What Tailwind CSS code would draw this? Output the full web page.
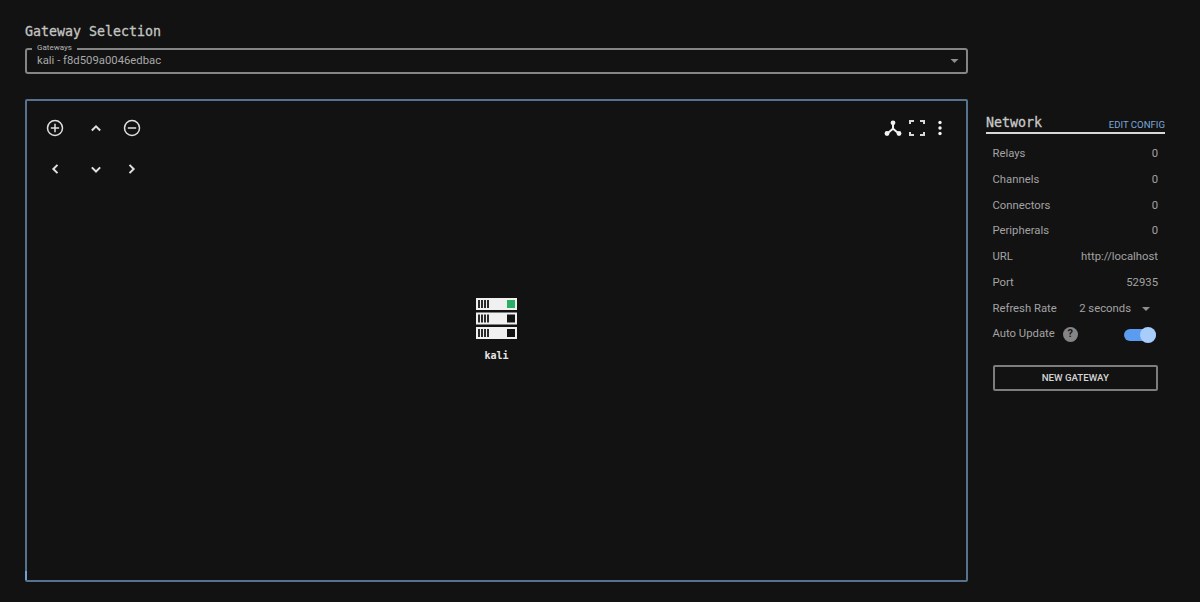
<!DOCTYPE html>
<html lang="en">
<head>
  <meta charset="UTF-8">
  <title>Gateway Selection</title>
  <script src="https://cdn.jsdelivr.net/npm/@tailwindcss/browser@4"></script>
</head>
<body class="bg-[#121212] h-[602px] w-[1200px] overflow-hidden font-['Roboto',sans-serif]">
  <div class="pl-[25px] pt-[23px] flex flex-col w-[968px]">
    <h1 class="font-['DejaVu_Sans_Mono',monospace] text-[13.3px] leading-[18px] text-[#c4c4c4] [-webkit-text-stroke:0.3px_#c4c4c4]">Gateway Selection</h1>

    <!-- gateway select -->
    <div class="relative mt-[7px] h-[26px] border-2 border-[#858585] rounded-[3px] flex items-center justify-between pl-[10px] pr-[7px]">
      <span class="absolute -top-[7px] left-[5px] bg-[#121212] px-[5px] text-[8px] leading-[10px] text-[#b5b5b5]">Gateways</span>
      <span class="text-[11.3px] text-[#a8a8a8]">kali - f8d509a0046edbac</span>
      <svg width="9" height="4" viewBox="0 0 10 5"><path d="M0 0h10L5 5z" fill="#8f8f8f"/></svg>
    </div>

    <!-- graph panel -->
    <div class="relative mt-[25px] h-[483px] border-2 border-[#56728f] rounded-[2px] flex items-center justify-center pb-[21px]">
      <span class="absolute -left-[2px] bottom-0 w-[2px] h-[9px] bg-[#6f9fd4]"></span>
      <div class="absolute top-[17px] left-[18px] flex flex-col gap-[21px]">
        <div class="flex items-center">
          <svg class="w-[20px] h-[20px] mr-[21px]" viewBox="0 0 24 24" fill="none" stroke="#e0e0e0" stroke-width="1.800"><circle cx="12" cy="12" r="9"/><path d="M12 7v10M7 12h10"/></svg>
          <svg class="w-[20px] h-[20px] mr-[16px]" viewBox="0 0 24 24" fill="none" stroke="#e0e0e0" stroke-width="2.400"><path d="M7 15l5-5 5 5"/></svg>
          <svg class="w-[20px] h-[20px]" viewBox="0 0 24 24" fill="none" stroke="#e0e0e0" stroke-width="1.800"><circle cx="12" cy="12" r="9"/><path d="M7 12h10"/></svg>
        </div>
        <div class="flex items-center">
          <svg class="w-[20px] h-[20px] mr-[21px]" viewBox="0 0 24 24" fill="none" stroke="#e0e0e0" stroke-width="2.400"><path d="M15 7l-5 5 5 5"/></svg>
          <svg class="w-[20px] h-[20px] mr-[16px]" viewBox="0 0 24 24" fill="none" stroke="#e0e0e0" stroke-width="2.400"><path d="M7 10l5 5 5-5"/></svg>
          <svg class="w-[20px] h-[20px]" viewBox="0 0 24 24" fill="none" stroke="#e0e0e0" stroke-width="2.400"><path d="M9 7l5 5-5 5"/></svg>
        </div>
      </div>

      <div class="absolute top-[17px] right-[16px] flex items-center gap-[4px]">
        <svg class="w-[20px] h-[20px]" viewBox="0 0 20 20" fill="#f2f2f2"><circle cx="10" cy="4.800" r="2.400"/><circle cx="4" cy="15.500" r="2.400"/><circle cx="16" cy="15.500" r="2.400"/><path d="M9 5h2v5.200l5 4.300-1.200 1.500-4.800-4-4.800 4L4 14.500l5-4.300z"/></svg>
        <svg class="w-[20px] h-[20px]" viewBox="0 0 20 20" fill="none" stroke="#d8d8d8" stroke-width="2"><path d="M3 6V3h4M13 3h4v3M17 14v3h-4M7 17H3v-3"/></svg>
        <svg class="w-[20px] h-[20px] -ml-[1px]" viewBox="0 0 20 20" fill="#f2f2f2"><circle cx="10" cy="4.500" r="1.700"/><circle cx="10" cy="10" r="1.700"/><circle cx="10" cy="15.500" r="1.700"/></svg>
      </div>

      <!-- gateway node -->
      <div class="flex flex-col items-center">
        <svg width="41" height="41" viewBox="0 0 41 41">
          <rect width="41" height="12" fill="#f0f0f0"/>
          <rect y="14.500" width="41" height="12" fill="#f0f0f0"/>
          <rect y="29" width="41" height="12" fill="#f0f0f0"/>
          <path d="M2 2h2v8H2zM5 2h2v8H5zM8 2h2v8H8zM11 2h2v8h-2zM2 16.500h2v8H2zM5 16.500h2v8H5zM8 16.500h2v8H8zM11 16.500h2v8h-2zM2 31h2v8H2zM5 31h2v8H5zM8 31h2v8H8zM11 31h2v8h-2z" fill="#2a2a2a"/>
          <rect x="31" y="2" width="8" height="8" fill="#2bae66"/>
          <rect x="31" y="16.500" width="8" height="8" fill="#121212"/>
          <rect x="31" y="31" width="8" height="8" fill="#121212"/>
        </svg>
        <span class="mt-[10px] font-['DejaVu_Sans_Mono',monospace] text-[10px] leading-[13px] font-bold text-[#e6e6e6]">kali</span>
      </div>
    </div>
  </div>

  <!-- network sidebar -->
  <div class="absolute top-[113px] left-[986px] w-[179px] flex flex-col">
    <div class="flex items-end justify-between border-b-2 border-[#d8d8d8] h-[21px]">
      <h2 class="font-['DejaVu_Sans_Mono',monospace] text-[13.3px] leading-[18px] text-[#c8c8c8] [-webkit-text-stroke:0.3px_#c8c8c8]">Network</h2>
      <span class="text-[9.600px] leading-[14px] text-[#7da7d9]">EDIT CONFIG</span>
    </div>
    <div class="pl-[6.500px] pr-[7px] pt-[8px] flex flex-col text-[11.300px] text-[#a3a3a3]">
      <div class="h-[25.700px] flex items-center justify-between"><span>Relays</span><span>0</span></div>
      <div class="h-[25.700px] flex items-center justify-between"><span>Channels</span><span>0</span></div>
      <div class="h-[25.700px] flex items-center justify-between"><span>Connectors</span><span>0</span></div>
      <div class="h-[25.700px] flex items-center justify-between"><span>Peripherals</span><span>0</span></div>
      <div class="h-[25.700px] flex items-center justify-between"><span>URL</span><span>http://localhost</span></div>
      <div class="h-[25.700px] flex items-center justify-between"><span>Port</span><span>52935</span></div>
      <div class="h-[25.700px] flex items-center justify-between">
        <span>Refresh Rate</span>
        <span class="flex items-center mr-[8px]">2 seconds<svg class="ml-[11px]" width="8" height="4" viewBox="0 0 8 4"><path d="M0 0h8L4 4z" fill="#8f8f8f"/></svg></span>
      </div>
      <div class="h-[25.700px] flex items-center justify-between">
        <span class="flex items-center">Auto Update<span class="ml-[8px] w-[15px] h-[15px] rounded-full bg-[#858585] text-[#1a1a1a] text-[11px] font-bold flex items-center justify-center">?</span></span>
        <span class="relative mr-[2px] w-[32px] h-[16px] flex items-center">
          <span class="block w-full h-[12px] rounded-full bg-[#5b9bf0]"></span>
          <span class="absolute right-0 w-[16px] h-[16px] rounded-full bg-[#a8cdfa]"></span>
        </span>
      </div>
      <button class="mt-[17px] h-[26px] pt-[2px] border-2 border-[#7d7d7d] rounded-[2px] text-[9.700px] font-medium text-[#d4d4d4]">NEW GATEWAY</button>
    </div>
  </div>
</body>
</html>
